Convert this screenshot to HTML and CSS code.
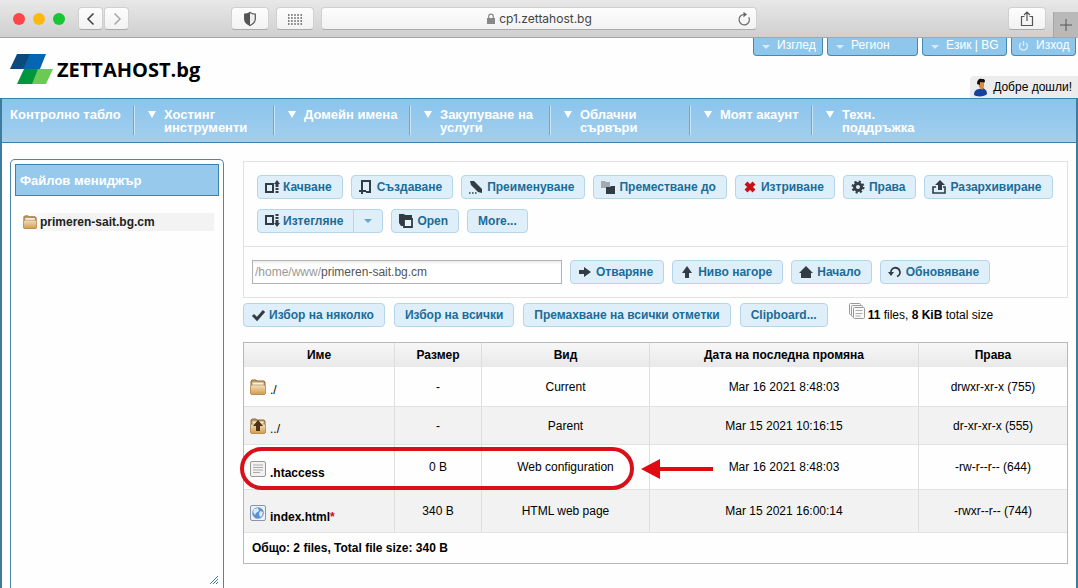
FILE: index.html
```html
<!DOCTYPE html>
<html lang="bg">
<head>
<meta charset="utf-8">
<title>ZETTAHOST.bg</title>
<link rel="stylesheet" href="styles.css">
</head>
<body>
<div class="browser">
  <div class="dots"><span class="dot red"></span><span class="dot yellow"></span><span class="dot green"></span></div>
  <div class="history">
    <button class="chrome-btn arrow" aria-label="Back"><svg width="12" height="16" viewBox="0 0 12 16"><path d="M8.500 2.500 3 8l5.500 5.500" fill="none" stroke="#444" stroke-width="1.600"/></svg></button>
    <button class="chrome-btn arrow" aria-label="Forward"><svg width="12" height="16" viewBox="0 0 12 16"><path d="M3.500 2.500 9 8l-5.500 5.500" fill="none" stroke="#aaa" stroke-width="1.600"/></svg></button>
  </div>
  <div class="tools">
    <button class="chrome-btn" aria-label="Privacy"><svg width="14" height="16" viewBox="0 0 14 16"><path d="M7 1.500c2 1.300 3.500 1.600 5.300 1.700v5c0 3-2.300 4.800-5.300 6.300-3-1.500-5.300-3.300-5.300-6.300v-5C3.500 3.100 5 2.800 7 1.500z" fill="#eee" stroke="#555" stroke-width="1.200"/><path d="M7 1.500v13c-3-1.500-5.300-3.300-5.300-6.300v-5C3.500 3.100 5 2.800 7 1.500z" fill="#555"/></svg></button>
    <button class="chrome-btn" aria-label="Top sites"><svg width="16" height="14" viewBox="0 0 16 14"><path d="M1 3h14M1 6h14M1 9h14M1 12h14" stroke="#555" stroke-width="1.300" stroke-dasharray="1.500 1.620"/></svg></button>
  </div>
  <div class="address">
    <svg width="10" height="12" viewBox="0 0 10 12"><path d="M1 5h8v6H1z" fill="#888"/><path d="M2.700 5V3.500a2.300 2.300 0 0 1 4.600 0V5" fill="none" stroke="#888" stroke-width="1.200"/></svg>
    <span>cp1.zettahost.bg</span>
    <button class="reload" aria-label="Reload"><svg width="14" height="16" viewBox="0 0 14 16"><path d="M11.800 6.200A5.200 5.200 0 1 1 7 3.500" fill="none" stroke="#666" stroke-width="1.200"/><path d="M6.500.8 10 3.500 6.500 6.200z" fill="#666"/></svg></button>
  </div>
  <button class="chrome-btn share" aria-label="Share"><svg width="14" height="16" viewBox="0 0 14 16"><path d="M4.500 5.500H1.500v9h11v-9H9.500M7 10V1.200M4 4l3-3 3 3" fill="none" stroke="#555" stroke-width="1.200"/></svg></button>
  <button class="newtab" aria-label="New tab"><svg width="14" height="14" viewBox="0 0 14 14"><path d="M7 1v12M1 7h12" stroke="#555"/></svg></button>
</div>

<header class="header">
  <a class="logo" href="#"><svg width="43" height="31" viewBox="0 0 43 31"><path d="M7 0h18l-7 15H0z" fill="#0c4a7d"/><path d="M20 0h16l-6 15H13z" fill="#0466b0"/><path d="M14 15h17l-8 15H7z" fill="#00963c"/><path d="M28 15h15l-7 15H22z" fill="#6cc954"/></svg><span>ZETTAHOST.bg</span></a>
  <div class="account">
    <div class="tabs">
      <button class="tab view"><i class="caret"></i>Изглед</button>
      <button class="tab region"><i class="caret"></i>Регион</button>
      <button class="tab lang"><i class="caret"></i>Език | BG</button>
      <button class="tab exit"><svg width="11" height="11" viewBox="0 0 11 11"><path d="M3 2a4 4 0 1 0 5 0M5.500 0v5" fill="none" stroke="#d5ecfa" stroke-width="1.400"/></svg>Изход</button>
    </div>
    <div class="welcome"><svg width="15" height="19" viewBox="0 0 15 19"><path d="M1 17c0-4 2-5.500 5-6l4-1c3 1.500 4 3 4 6-2 3-11 3-13 1z" fill="#173f9e"/><path d="M5 3h6v6l-2 3-3-3z" fill="#d98b38"/><path d="M4 6c0-4 2-6 5-5 3-.5 3.500 2 2.500 3.500L7 4v3z" fill="#111"/></svg>Добре дошли!</div>
  </div>
</header>

<div class="page">
  <nav class="nav">
    <a class="first" href="#">Контролно табло</a>
    <a href="#"><i></i><span>Хостинг инструменти</span></a>
    <a class="mid" href="#"><i></i><span>Домейн имена</span></a>
    <a href="#"><i></i><span>Закупуване на услуги</span></a>
    <a href="#"><i></i><span>Облачни сървъри</span></a>
    <a class="short" href="#"><i></i><span>Моят акаунт</span></a>
    <a href="#"><i></i><span>Техн. поддръжка</span></a>
  </nav>
  <div class="content">
    <aside class="sidebar">
      <h2>Файлов мениджър</h2>
      <a class="site" href="#"><svg width="14" height="14" viewBox="0 0 16 16"><use href="#folder"/></svg>primeren-sait.bg.cm</a>
      <svg class="grip" width="8" height="8" viewBox="0 0 8 8"><path d="M0 8 8 0M3 8l5-5M6 8l2-2" stroke="#3b83ac"/></svg>
    </aside>
    <main class="main">
      <section class="panel">
        <div class="actions">
          <button class="btn"><svg viewBox="0 0 16 16"><path d="M2 5h7v8H2z" fill="none" stroke="#333b44" stroke-width="2"/><path d="M13 14v-2m0-1V9m0-1V4" stroke="#333b44" stroke-width="3"/><path d="M10 5l3-4 3 4z" fill="#333b44"/></svg>Качване</button>
          <button class="btn"><svg viewBox="0 0 16 16"><path d="M4 9V2h8v11H8M1 12h7M4 9v6" fill="none" stroke="#333b44" stroke-width="2"/></svg>Създаване</button>
          <button class="btn"><svg viewBox="0 0 16 16"><path d="M2 2l4 0 8 8v4l-4-1L3 6z" fill="#333b44"/><path d="M1 14h9" stroke="#333b44" stroke-width="1.500" stroke-dasharray="1.500 1.500"/></svg>Преименуване</button>
          <button class="btn"><svg viewBox="0 0 16 16"><path d="M1 2h4l1 1h4v6H1z" fill="#a4aab0"/><path d="M6 8h4l1-1h4v8H6z" fill="#333b44"/></svg>Преместване до</button>
          <button class="btn"><svg viewBox="0 0 16 16"><path d="M4 4l8 8M12 4l-8 8" stroke="#c91019" stroke-width="4"/></svg>Изтриване</button>
          <button class="btn"><svg viewBox="0 0 16 16"><circle cx="8" cy="8" r="3.500" fill="none" stroke="#333b44" stroke-width="3"/><circle cx="8" cy="8" r="5.500" fill="none" stroke="#333b44" stroke-width="2" stroke-dasharray="2.200 2.120"/></svg>Права</button>
          <button class="btn"><svg viewBox="0 0 16 16"><path d="M5 8H2v6h12V8h-2" fill="none" stroke="#333b44" stroke-width="1.600"/><path d="M4 6l5-5 5 5h-3v5H7V6z" fill="#333b44"/></svg>Разархивиране</button>
          <div class="split"><button class="btn"><svg viewBox="0 0 16 16"><path d="M2 3h7v8H2z" fill="none" stroke="#333b44" stroke-width="2"/><path d="M13 1v2m0 1v2m0 1v4" stroke="#333b44" stroke-width="3"/><path d="M10 10l3 4 3-4z" fill="#333b44"/></svg>Изтегляне</button><button class="btn drop" aria-label="More downloads"><i class="caret blue"></i></button></div>
          <button class="btn"><svg viewBox="0 0 16 16"><path d="M1 1h5l1 1h7v3H6v8H3l-2-3z" fill="#333b44"/><path d="M6 6h8v8H6z" fill="#e8f3fa" stroke="#333b44" stroke-width="1.800"/></svg>Open</button>
          <button class="btn plain">More...</button>
        </div>
        <form class="location">
          <label class="path"><span>/home/www/</span><input type="text" value="primeren-sait.bg.cm" aria-label="Path"></label>
          <button type="button" class="btn"><svg viewBox="0 0 16 16"><path d="M2 6h5V3l7 5-7 5v-3H2z" fill="#333b44"/></svg>Отваряне</button>
          <button type="button" class="btn"><svg viewBox="0 0 16 16"><path d="M8 2l5 7h-3v5H6V9H3z" fill="#333b44"/></svg>Ниво нагоре</button>
          <button type="button" class="btn"><svg viewBox="0 0 16 16"><path d="M8 2l7 7h-2v5H3V9H1z" fill="#333b44"/></svg>Начало</button>
          <button type="button" class="btn"><svg viewBox="0 0 16 16"><path d="M4 9a4.500 4.500 0 1 1 6 3.500" fill="none" stroke="#333b44" stroke-width="1.800"/><path d="M1 8h6l-3 4z" fill="#333b44"/></svg>Обновяване</button>
        </form>
      </section>
      <div class="selection">
        <button class="btn"><svg viewBox="0 0 16 16"><path d="M3 8l4 4 7-8" fill="none" stroke="#333b44" stroke-width="3"/></svg>Избор на няколко</button>
        <button class="btn plain">Избор на всички</button>
        <button class="btn plain">Премахване на всички отметки</button>
        <button class="btn plain">Clipboard...</button>
        <p class="summary"><svg width="17" height="17" viewBox="0 0 17 17"><g fill="#fafafa" stroke="#999"><rect x=".5" y=".5" width="11" height="11" rx="1"/><rect x="2.500" y="2.500" width="11" height="11" rx="1"/><rect x="4.500" y="4.500" width="11" height="11" rx="1"/></g><path d="M6.500 7.500h7M6.500 10.500h7M6.500 13h5" stroke="#aaa"/></svg><span><b>11</b> files, <b>8 KiB</b> total size</span></p>
      </div>
      <table class="files">
        <colgroup><col class="c-name"><col class="c-size"><col class="c-type"><col class="c-date"><col></colgroup>
        <thead><tr><th>Име</th><th>Размер</th><th>Вид</th><th>Дата на последна промяна</th><th>Права</th></tr></thead>
        <tbody>
          <tr><td><a href="#"><svg width="16" height="16" viewBox="0 0 16 16"><use href="#folder"/></svg>./</a></td><td>-</td><td>Current</td><td>Mar 16 2021 8:48:03</td><td>drwxr-xr-x (755)</td></tr>
          <tr class="alt"><td><a href="#"><svg width="16" height="16" viewBox="0 0 16 16"><use href="#folder"/><path d="M8 2l5 6h-3v5H6V8H3z" fill="#4d3214"/></svg>../</a></td><td>-</td><td>Parent</td><td>Mar 15 2021 10:16:15</td><td>dr-xr-xr-x (555)</td></tr>
          <tr class="file marked"><td><a href="#"><svg width="16" height="16" viewBox="0 0 16 16"><rect x=".5" y=".5" width="15" height="15" rx="1.500" fill="#f2f2f2" stroke="#999"/><path d="M3 4h10M3 6.500h10M3 9h10M3 11.500h7" stroke="#aaa"/></svg>.htaccess</a><div class="ring"></div><svg class="pointer" width="72" height="20" viewBox="0 0 72 20"><path d="M0 10 19 0v8h53v4H19v8z" fill="#e10a12"/></svg></td><td>0 B</td><td>Web configuration</td><td>Mar 16 2021 8:48:03</td><td>-rw-r--r-- (644)</td></tr>
          <tr class="alt file"><td><a href="#"><svg width="16" height="16" viewBox="0 0 16 16"><rect x=".5" y=".5" width="15" height="15" rx="1.500" fill="#edf1f6" stroke="#8b96a5"/><circle cx="8" cy="8" r="5.800" fill="#5c93cf"/><path d="M4 4l4-1 1 3-3 2-1 2-2-3zM10 6l3 1-1 4-2 1-1-3z" fill="#dce9f4"/></svg>index.html<em>*</em></a></td><td>340 B</td><td>HTML web page</td><td>Mar 15 2021 16:00:14</td><td>-rwxr--r-- (744)</td></tr>
        </tbody>
        <tfoot><tr><td colspan="5">Общо: 2 files, Total file size: 340 B</td></tr></tfoot>
      </table>
    </main>
  </div>
</div>
<svg class="defs" width="0" height="0"><defs>
  <linearGradient id="tan" x1="0" y1="0" x2="0" y2="1"><stop offset="0" stop-color="#f3dfbd"/><stop offset="1" stop-color="#d29a4e"/></linearGradient>
  <g id="folder"><path d="M1 15V2l1-1h4l1 1h7l1 1v12z" fill="#c49a62" stroke="#8e6c3f"/><path d="M2.500 3.500h11v4h-11z" fill="#f1efe9"/><path d="M.5 7l1.500-1h12l1.500 1v7.500l-1 1h-13l-1-1z" fill="url(#tan)" stroke="#b07f3f" stroke-width=".6"/></g>
</defs></svg>
</body>
</html>
```
FILE: styles.css
```css
* { box-sizing: border-box; }
body {
  margin: 0;
  min-height: 100vh;
  display: flex;
  flex-direction: column;
  background: #fefefe;
  color: #000;
  font: 12px/14px "Liberation Sans", Arial, sans-serif;
}
button, input { font: inherit; margin: 0; }
a { color: inherit; text-decoration: none; }
svg { display: block; flex: none; }
.defs { position: absolute; }

/* Browser toolbar */
.browser {
  display: flex;
  align-items: center;
  height: 38px;
  padding-left: 13px;
  background: linear-gradient(#e8e8e8, #cfcfcf);
  border-bottom: 1px solid #a6a6a6;
}
.dots { display: flex; gap: 8px; }
.dot { width: 12px; height: 12px; border-radius: 50%; }
.red { background: #fc4649; }
.yellow { background: #fdb912; }
.green { background: #18c532; }
.history { display: flex; gap: 1px; margin-left: 13px; }
.tools { display: flex; gap: 7px; margin-left: 102px; }
.chrome-btn {
  display: flex;
  align-items: center;
  justify-content: center;
  width: 38px;
  height: 23px;
  padding: 0;
  border: 1px solid #d0d0d0;
  border-bottom-color: #aaa;
  border-radius: 4px;
  background: linear-gradient(#fdfdfd, #f2f2f2);
}
.arrow { width: 25px; }
.address {
  position: relative;
  display: flex;
  flex: 1;
  align-items: center;
  justify-content: center;
  gap: 3px;
  height: 23px;
  margin-left: 7px;
  border: 1px solid #d0d0d0;
  border-bottom-color: #aaa;
  border-radius: 4px;
  background: linear-gradient(#fdfdfd, #f2f2f2);
  color: #444;
  font: 12px/14px Inter, sans-serif;
}
.reload { position: absolute; right: 5px; padding: 0; border: 0; background: none; }
.share { margin-left: 251px; }
.newtab {
  align-self: flex-end;
  display: flex;
  align-items: center;
  justify-content: center;
  width: 25px;
  height: 25px;
  margin-left: 7px;
  padding: 0;
  border: 0;
  border-left: 1px solid #a6a6a6;
  background: #b9b9b9;
}

/* Site header */
.header { display: flex; justify-content: space-between; height: 60px; padding-left: 10px; }
.logo { display: flex; gap: 4px; margin-top: 16px; font: bold 20px/32px "Open Sans", sans-serif; }
.account { display: flex; flex-direction: column; justify-content: space-between; align-items: flex-end; }
.tabs { display: flex; gap: 4px; padding-right: 2px; }
.tab {
  display: flex;
  align-items: center;
  gap: 7px;
  height: 18px;
  padding: 0 4px 4px 8px;
  border: 1px solid #4389b2;
  border-top: 0;
  border-radius: 0 0 4px 4px;
  background: #8fc7ec;
  color: #fff;
  white-space: nowrap;
}
.view { width: 70px; }
.region { width: 91px; }
.lang { width: 85px; }
.exit { width: 65px; padding-left: 6px; }
.exit svg { margin-top: 4px; }
.caret { flex: none; margin-top: 4px; border: 4px solid transparent; border-top-color: #d5ecfa; border-bottom: 0; }
.caret.blue { margin: 0; border-top-color: #64a7ce; }
.welcome {
  display: flex;
  align-items: center;
  gap: 5px;
  height: 22px;
  padding: 0 6px 0 3px;
  border-radius: 4px 0 0 0;
  background: #ececec;
}

/* Navigation */
.page {
  flex: 1;
  display: flex;
  flex-direction: column;
  border: solid #3d7b9f;
  border-width: 0 2px;
}
.nav {
  display: flex;
  height: 45px;
  padding-top: 7px;
  border: solid #3b83ac;
  border-width: 1px 0;
  background: linear-gradient(#8bc4ee, #a3cfec);
  color: #fff;
  font: bold 13px/13px "Liberation Sans", Arial, sans-serif;
}
.nav a {
  display: flex;
  align-items: flex-start;
  width: 140px;
  height: 29px;
  padding: 2px 6px 0 14px;
  border-right: 1px solid #6ba9d0;
  box-shadow: 1px 0 #c9e5f7;
}
.nav .first { width: 132px; padding-left: 8px; white-space: nowrap; }
.nav .mid { width: 136px; white-space: nowrap; }
.nav .short { width: 122px; white-space: nowrap; }
.nav a:last-child { border: 0; box-shadow: none; }
.nav i { flex: none; margin: 3px 8px 0 0; border: 4px solid transparent; border-top: 7px solid #fff; border-bottom: 0; }

/* Columns */
.content { flex: 1; display: flex; gap: 19px; padding: 16px 8px 0 8px; }
.sidebar {
  position: relative;
  flex: none;
  width: 214px;
  padding: 4px;
  border: 1px solid #4c86a8;
  border-bottom: 0;
  border-radius: 5px 5px 0 0;
}
.sidebar h2 {
  margin: 0 0 17px;
  padding: 8px 4px 7px;
  border: 1px solid #3b83ac;
  background: #97c9ed;
  color: #fff;
  font-size: 13px;
  line-height: 15px;
}
.site {
  display: flex;
  align-items: center;
  gap: 3px;
  height: 18px;
  margin: 0 5px 0 8px;
  background: linear-gradient(90deg, #fefefe, #f3f3f3 20%);
  color: #222;
  font-weight: bold;
}
.grip { position: absolute; right: 5px; bottom: 4px; }
.main { flex: 1; padding-top: 2px; }

/* Toolbars */
.panel { border: 1px solid #e2e2e2; }
.actions { display: flex; flex-wrap: wrap; gap: 10px 8px; padding: 13px 10px 13px 13px; border-bottom: 1px solid #e2e2e2; }
.location { display: flex; gap: 8px; padding: 13px 8px; }
.selection { display: flex; gap: 9px; padding-top: 5px; }
.btn {
  display: flex;
  align-items: center;
  gap: 3px;
  height: 24px;
  padding: 0 10px 0 6px;
  border: 1px solid #b5d5e8;
  border-radius: 4px;
  background: #dfeffa;
  color: #1b6c97;
  font-weight: bold;
  white-space: nowrap;
}
.btn svg { width: 16px; height: 16px; }
.plain { padding: 0 10px; }
.split { display: flex; }
.split .btn:first-child { border-radius: 4px 0 0 4px; }
.split .drop { width: 30px; margin-left: -1px; padding: 0 10px; border-radius: 0 4px 4px 0; }
.path {
  display: flex;
  align-items: center;
  width: 310px;
  height: 24px;
  padding-left: 2px;
  border: 1px solid #b3b3b3;
  background: #fff;
  box-shadow: inset 0 2px 2px #eee;
  color: #999;
}
.path input { flex: 1; min-width: 0; padding: 0; border: 0; outline: 0; background: none; color: #555; }
.summary { display: flex; gap: 2px; margin: 0 0 0 12px; line-height: 24px; }

/* File table */
.files {
  width: 100%;
  margin-top: 15px;
  border-collapse: separate;
  border-spacing: 0;
  table-layout: fixed;
  border: 1px solid #b9b9b9;
}
.c-name { width: 150px; }
.c-size { width: 87px; }
.c-type { width: 168px; }
.c-date { width: 269px; }
.files th { height: 24px; padding: 0; background: linear-gradient(#f7f7f7, #e9e9e9); }
.files th + th, .files td + td { border-left: 1px solid #dedede; }
.files td { height: 39px; padding: 0; text-align: center; }
.files .alt td { border-top: 1px solid #e2e2e2; border-bottom: 1px solid #e2e2e2; background: #f2f2f2; }
.files td a { display: flex; align-items: flex-end; gap: 4px; padding: 2px 0 0 6px; }
.files td a svg { margin-bottom: 2px; }
.files .file td { height: 44px; }
.files .file td a { padding-top: 6px; font-weight: bold; line-height: 12px; }
.files em { margin-left: -4px; color: #c91019; font-style: normal; }
.files tfoot td { height: 30px; padding-left: 8px; font-weight: bold; text-align: left; }

/* Callout over the marked row */
.marked { position: relative; }
.ring {
  position: absolute;
  top: 2px;
  left: -4px;
  width: 394px;
  height: 43px;
  border: 4px solid #d9101a;
  border-radius: 22px;
}
.pointer { position: absolute; top: 14px; left: 397px; }
```
